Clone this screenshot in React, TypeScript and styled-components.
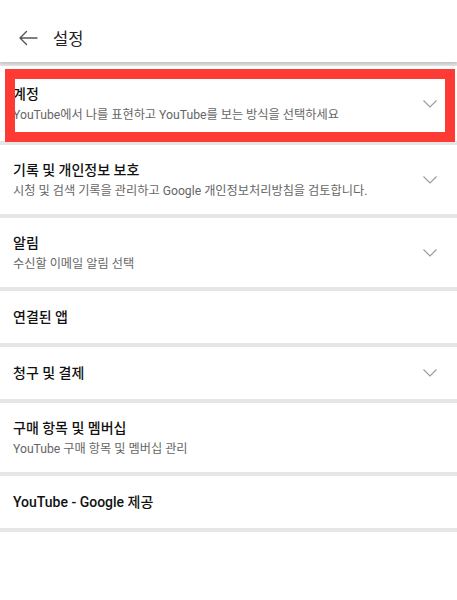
import { FC } from "react";
import styled, { createGlobalStyle } from "styled-components";

const GlobalStyle = createGlobalStyle`
  html, body {
    margin: 0;
    padding: 0;
    background: #ffffff;
  }
  body {
    font-family: Roboto, "Noto Sans CJK KR", sans-serif;
    -webkit-font-smoothing: antialiased;
  }
`;

type Item = {
  title: string;
  subtitle?: string;
  expandable?: boolean;
  highlighted?: boolean;
};

const items: Item[] = [
  {
    title: "계정",
    subtitle: "YouTube에서 나를 표현하고 YouTube를 보는 방식을 선택하세요",
    expandable: true,
    highlighted: true,
  },
  {
    title: "기록 및 개인정보 보호",
    subtitle: "시청 및 검색 기록을 관리하고 Google 개인정보처리방침을 검토합니다.",
    expandable: true,
  },
  { title: "알림", subtitle: "수신할 이메일 알림 선택", expandable: true },
  { title: "연결된 앱" },
  { title: "청구 및 결제", expandable: true },
  { title: "구매 항목 및 멤버십", subtitle: "YouTube 구매 항목 및 멤버십 관리" },
  { title: "YouTube - Google 제공" },
];

const BackArrow: FC = () => (
  <svg width="20" height="16" viewBox="0 0 20 16" fill="none">
    <path
      d="M19 8H2M8.5 1.5L2 8l6.5 6.5"
      stroke="#555"
      strokeWidth="1.4"
      strokeLinecap="round"
      strokeLinejoin="round"
    />
  </svg>
);

const Chevron: FC = () => (
  <svg width="14" height="8" viewBox="0 0 14 8" fill="none">
    <path d="M0.5 0.5L7 7L13.5 0.5" stroke="#9a9a9a" strokeWidth="1.1" />
  </svg>
);

const App: FC = () => (
  <>
    <GlobalStyle />
    <Page>
      <Header>
        <BackButton aria-label="뒤로">
          <BackArrow />
        </BackButton>
        <Title>설정</Title>
      </Header>
      <List>
        {items.map((item) => (
          <Row
            key={item.title}
            $twoLine={!!item.subtitle}
            $highlighted={!!item.highlighted}
          >
            <Texts>
              <RowTitle>{item.title}</RowTitle>
              {item.subtitle && <RowSubtitle>{item.subtitle}</RowSubtitle>}
            </Texts>
            {item.expandable && (
              <ChevronWrap>
                <Chevron />
              </ChevronWrap>
            )}
            {item.highlighted && <Highlight />}
          </Row>
        ))}
      </List>
    </Page>
  </>
);

export default App;

const Page = styled.div`
  width: 457px;
  min-height: 600px;
  background: #ffffff;
`;

const Header = styled.header`
  height: 62px;
  box-sizing: border-box;
  display: flex;
  align-items: center;
  gap: 15px;
  padding: 13px 0 0 18px;
  background: #ffffff;
  box-shadow: 0 2px 3px rgba(0, 0, 0, 0.16);
  position: relative;
  z-index: 1;
`;

const BackButton = styled.button`
  display: flex;
  align-items: center;
  padding: 0;
  border: none;
  background: none;
`;

const Title = styled.h1`
  margin: 0;
  font-size: 16.5px;
  font-weight: 400;
  color: #222;
`;

const List = styled.div`
  display: flex;
  flex-direction: column;
  gap: 4px;
  padding: 4px 0;
  background: #e6e6e6;
`;

const Row = styled.div<{ $twoLine: boolean; $highlighted: boolean }>`
  position: relative;
  display: flex;
  align-items: center;
  justify-content: space-between;
  height: ${(p) => (p.$highlighted ? 75 : p.$twoLine ? 69 : 52)}px;
  padding: 0 20px 0 13px;
  box-sizing: border-box;
  background: #ffffff;
`;

const Texts = styled.div`
  display: flex;
  flex-direction: column;
  gap: 3px;
`;

const RowTitle = styled.div`
  font-size: 14px;
  line-height: 20px;
  font-weight: 500;
  color: #111;
`;

const RowSubtitle = styled.div`
  font-size: 12.2px;
  line-height: 17px;
  color: #666;
`;

const ChevronWrap = styled.div`
  display: flex;
  align-items: center;
`;

const Highlight = styled.div`
  position: absolute;
  top: 3px;
  left: 5px;
  right: 2px;
  bottom: -1px;
  border: 10px solid #fe3a34;
  pointer-events: none;
`;
